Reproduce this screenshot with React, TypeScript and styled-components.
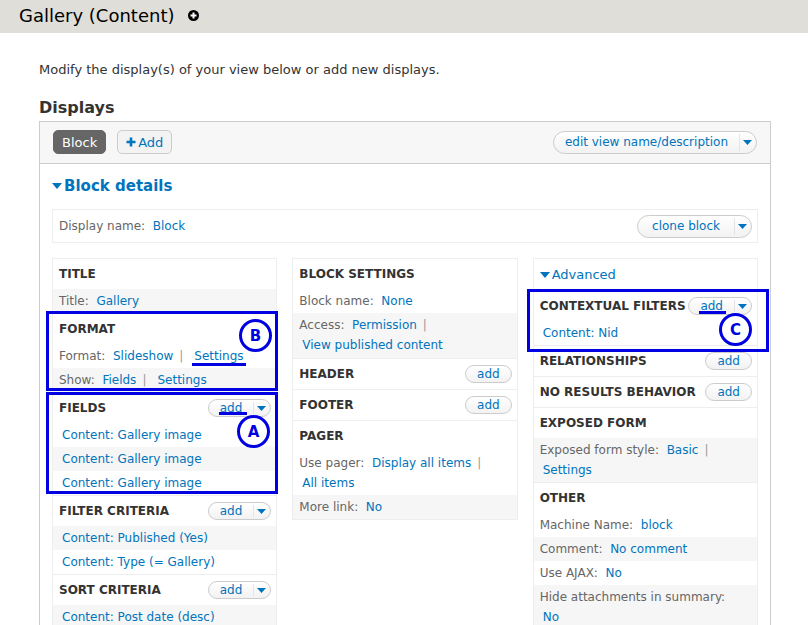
import React from "react";
import styled, { createGlobalStyle } from "styled-components";

const Global = createGlobalStyle`
  html, body { margin: 0; padding: 0; background: #fff; }
  body { font-family: "DejaVu Sans", "Liberation Sans", sans-serif; font-size: 12px; color: #333; }
  * { box-sizing: border-box; }
`;

const BLUE = "#0074bd";
const MARK = "#0000e0";

const Page = styled.div`
  position: relative;
  width: 808px;
  height: 625px;
  overflow: hidden;
`;

const TitleBar = styled.header`
  height: 33px;
  background: #dfded8;
  display: flex;
  align-items: center;
  padding: 0 0 3px 19px;
  gap: 14px;
`;

const PageTitle = styled.h1`
  margin: 0;
  font-size: 18px;
  font-weight: normal;
  color: #000;
`;

const Content = styled.main`
  padding: 0 37px 0 39px;
`;

const Intro = styled.p`
  margin: 28px 0 0;
  font-size: 13px;
  line-height: 18px;
  color: #333;
`;

const H2 = styled.h2`
  margin: 19px 0 0;
  font-size: 16px;
  line-height: 20px;
  font-weight: bold;
  color: #333;
`;

const MainBox = styled.section`
  margin-top: 3px;
  border: 1px solid #ccc;
  height: 600px;
`;

const TopBar = styled.div`
  height: 42px;
  background: #f7f7f7;
  border-bottom: 1px solid #ccc;
  display: flex;
  align-items: center;
  padding: 0 13px 1px;
  gap: 11px;
`;

const Tab = styled.span<{ $active?: boolean }>`
  display: inline-flex;
  align-items: center;
  height: 24px;
  padding: 0 8px;
  border-radius: 5px;
  font-size: 13px;
  background: ${(p) => (p.$active ? "#666" : "#f3f3f3")};
  color: ${(p) => (p.$active ? "#fff" : BLUE)};
  border: 1px solid ${(p) => (p.$active ? "#666" : "#ccc")};
  gap: 2px;
`;

const Spacer = styled.div`
  flex: 1;
`;

const Pill = styled.span<{ $h?: number }>`
  display: inline-flex;
  align-items: stretch;
  height: ${(p) => p.$h ?? 18}px;
  border: 1px solid #ccc;
  border-radius: 12px;
  background: linear-gradient(#fff, #f2f2f2);
  color: ${BLUE};
  overflow: hidden;
  font-weight: normal;
  text-transform: none;
  flex-shrink: 0;
`;

const PillText = styled.span<{ $pad?: number }>`
  display: flex;
  align-items: center;
  padding: 0 ${(p) => p.$pad ?? 12}px;
  font-size: 12px;
`;

const PillArrow = styled.span`
  display: flex;
  align-items: center;
  justify-content: center;
  width: 17px;
  border-left: 1px solid #e4e4e4;
  margin: 2px 0;
  padding-right: 1px;
`;

const Caret = () => (
  <svg width="9" height="5" viewBox="0 0 9 5">
    <path d="M0 0 H9 L4.5 5 Z" fill={BLUE} />
  </svg>
);

const Details = styled.div`
  padding: 0 12px 0 12px;
`;

const DetailsTitle = styled.div`
  display: flex;
  align-items: center;
  gap: 2px;
  height: 20px;
  margin-top: 12px;
  font-size: 15px;
  font-weight: bold;
  color: ${BLUE};
`;

const NameBox = styled.div`
  margin-top: 13px;
  height: 34px;
  border: 1px solid #eee;
  display: flex;
  align-items: center;
  padding: 0 5px 0 6px;
`;

const Label = styled.span`
  color: #666;
`;

const Link = styled.span`
  color: ${BLUE};
`;

const Columns = styled.div`
  margin-top: 15px;
  display: grid;
  grid-template-columns: repeat(3, minmax(0, 1fr));
  gap: 15px;
  align-items: start;
`;

const Column = styled.div`
  border: 1px solid #eee;
  border-bottom: none;
`;

const Section = styled.div`
  border-bottom: 1px solid #eee;
`;

const SectionHead = styled.div`
  height: 30px;
  display: flex;
  align-items: center;
  justify-content: space-between;
  padding: 0 5px 0 6px;
  font-weight: bold;
  font-size: 12px;
  color: #333;
  text-transform: uppercase;
  white-space: nowrap;
`;

const Row = styled.div<{ $shaded?: boolean; $tall?: boolean }>`
  padding: 2px 6px ${(p) => (p.$tall ? 3 : 2)}px;
  line-height: 20px;
  background: ${(p) => (p.$shaded ? "#f6f6f6" : "#fff")};
`;

const Indent = styled.span`
  padding-left: 3px;
`;

const Advanced = styled.div`
  height: 32px;
  display: flex;
  align-items: center;
  gap: 2px;
  padding: 0 6px 1px;
  color: ${BLUE};
  font-size: 13px;
`;

const Sep = styled.span`
  color: #999;
  margin: 0 11px 0 6px;
`;

const MarkBox = styled.div`
  position: absolute;
  border: 3px solid ${MARK};
  pointer-events: none;
`;

const MarkCircle = styled.div`
  position: absolute;
  width: 33px;
  height: 33px;
  border: 3.5px solid ${MARK};
  border-radius: 50%;
  background: #fff;
  color: ${MARK};
  font-weight: bold;
  font-size: 15px;
  display: flex;
  align-items: center;
  justify-content: center;
`;

const MarkLine = styled.div`
  position: absolute;
  height: 3px;
  background: ${MARK};
`;

const AddDrop = () => (
  <Pill>
    <PillText $pad={11}>add</PillText>
    <PillArrow>
      <Caret />
    </PillArrow>
  </Pill>
);

const AddBtn = () => (
  <Pill>
    <PillText $pad={11}>add</PillText>
  </Pill>
);

const Pair = ({ label, value }: { label: string; value: string }) => (
  <>
    <Label>{label}:</Label>&nbsp;&nbsp;<Link>{value}</Link>
  </>
);

export default function App() {
  return (
    <Page>
      <Global />
      <TitleBar>
        <PageTitle>Gallery (Content)</PageTitle>
        <svg width="11" height="11" viewBox="0 0 11 11">
          <circle cx="5.5" cy="5.5" r="5.5" fill="#000" />
          <path d="M5.5 2.5 V8.5 M2.5 5.5 H8.5" stroke="#fff" strokeWidth="2" />
        </svg>
      </TitleBar>
      <Content>
        <Intro>Modify the display(s) of your view below or add new displays.</Intro>
        <H2>Displays</H2>
        <MainBox>
          <TopBar>
            <Tab $active>Block</Tab>
            <Tab>
              <svg width="10" height="10" viewBox="0 0 10 10">
                <path d="M5 0.5 V9.5 M0.5 5 H9.5" stroke={BLUE} strokeWidth="2.6" />
              </svg>
              Add
            </Tab>
            <Spacer />
            <Pill $h={23}>
              <PillText $pad={11}>edit view name/description</PillText>
              <PillArrow>
                <Caret />
              </PillArrow>
            </Pill>
          </TopBar>
          <Details>
            <DetailsTitle>
              <svg width="10" height="6" viewBox="0 0 10 6">
                <path d="M0 0 H10 L5 6 Z" fill={BLUE} />
              </svg>
              Block details
            </DetailsTitle>
            <NameBox>
              <Label>Display name:</Label>&nbsp;&nbsp;<Link>Block</Link>
              <Spacer />
              <Pill $h={23}>
                <PillText $pad={14}>clone block</PillText>
                <PillArrow>
                  <Caret />
                </PillArrow>
              </Pill>
            </NameBox>
            <Columns>
              <Column>
                <Section>
                  <SectionHead>Title</SectionHead>
                  <Row $shaded>
                    <Pair label="Title" value="Gallery" />
                  </Row>
                </Section>
                <Section>
                  <SectionHead>Format</SectionHead>
                  <Row>
                    <Pair label="Format" value="Slideshow" />
                    <Sep>|</Sep>
                    <Link>Settings</Link>
                  </Row>
                  <Row $shaded>
                    <Pair label="Show" value="Fields" />
                    <Sep>|</Sep>
                    <Link>Settings</Link>
                  </Row>
                </Section>
                <Section>
                  <SectionHead>
                    Fields <AddDrop />
                  </SectionHead>
                  <Row><Indent><Link>Content: Gallery image</Link></Indent></Row>
                  <Row $shaded><Indent><Link>Content: Gallery image</Link></Indent></Row>
                  <Row><Indent><Link>Content: Gallery image</Link></Indent></Row>
                </Section>
                <Section>
                  <SectionHead>
                    Filter criteria <AddDrop />
                  </SectionHead>
                  <Row $shaded><Indent><Link>Content: Published (Yes)</Link></Indent></Row>
                  <Row><Indent><Link>Content: Type (= Gallery)</Link></Indent></Row>
                </Section>
                <Section>
                  <SectionHead>
                    Sort criteria <AddDrop />
                  </SectionHead>
                  <Row $shaded><Indent><Link>Content: Post date (desc)</Link></Indent></Row>
                </Section>
              </Column>

              <Column>
                <Section>
                  <SectionHead>Block settings</SectionHead>
                  <Row>
                    <Pair label="Block name" value="None" />
                  </Row>
                  <Row $shaded $tall>
                    <Pair label="Access" value="Permission" />
                    <Sep>|</Sep>
                    <br />
                    <Indent><Link>View published content</Link></Indent>
                  </Row>
                </Section>
                <Section>
                  <SectionHead>
                    Header <AddBtn />
                  </SectionHead>
                </Section>
                <Section>
                  <SectionHead>
                    Footer <AddBtn />
                  </SectionHead>
                </Section>
                <Section>
                  <SectionHead>Pager</SectionHead>
                  <Row>
                    <Pair label="Use pager" value="Display all items" />
                    <Sep>|</Sep>
                    <br />
                    <Indent><Link>All items</Link></Indent>
                  </Row>
                  <Row $shaded>
                    <Pair label="More link" value="No" />
                  </Row>
                </Section>
              </Column>

              <Column>
                <Advanced>
                  <svg width="10" height="6" viewBox="0 0 10 6">
                    <path d="M0 0 H10 L5 6 Z" fill={BLUE} />
                  </svg>
                  Advanced
                </Advanced>
                <Section>
                  <SectionHead>
                    Contextual filters <AddDrop />
                  </SectionHead>
                  <Row><Indent><Link>Content: Nid</Link></Indent></Row>
                </Section>
                <Section>
                  <SectionHead>
                    Relationships <AddBtn />
                  </SectionHead>
                </Section>
                <Section>
                  <SectionHead>
                    No results behavior <AddBtn />
                  </SectionHead>
                </Section>
                <Section>
                  <SectionHead>Exposed form</SectionHead>
                  <Row $shaded>
                    <Pair label="Exposed form style" value="Basic" />
                    <Sep>|</Sep>
                    <br />
                    <Indent><Link>Settings</Link></Indent>
                  </Row>
                </Section>
                <Section>
                  <SectionHead>Other</SectionHead>
                  <Row><Pair label="Machine Name" value="block" /></Row>
                  <Row $shaded><Pair label="Comment" value="No comment" /></Row>
                  <Row><Pair label="Use AJAX" value="No" /></Row>
                  <Row $shaded>
                    <Label>Hide attachments in summary:</Label>
                    <br />
                    <Indent><Link>No</Link></Indent>
                  </Row>
                </Section>
              </Column>
            </Columns>
          </Details>
        </MainBox>
      </Content>

      <MarkBox style={{ left: 46, top: 311, width: 232, height: 80 }} />
      <MarkBox style={{ left: 46, top: 392, width: 232, height: 102 }} />
      <MarkBox style={{ left: 527, top: 289, width: 242, height: 63 }} />
      <MarkLine style={{ left: 192, top: 363, width: 54 }} />
      <MarkLine style={{ left: 219, top: 412, width: 28 }} />
      <MarkLine style={{ left: 699, top: 311, width: 27 }} />
      <MarkCircle style={{ left: 239, top: 319 }}>B</MarkCircle>
      <MarkCircle style={{ left: 237, top: 415 }}>A</MarkCircle>
      <MarkCircle style={{ left: 719, top: 313 }}>C</MarkCircle>
    </Page>
  );
}
